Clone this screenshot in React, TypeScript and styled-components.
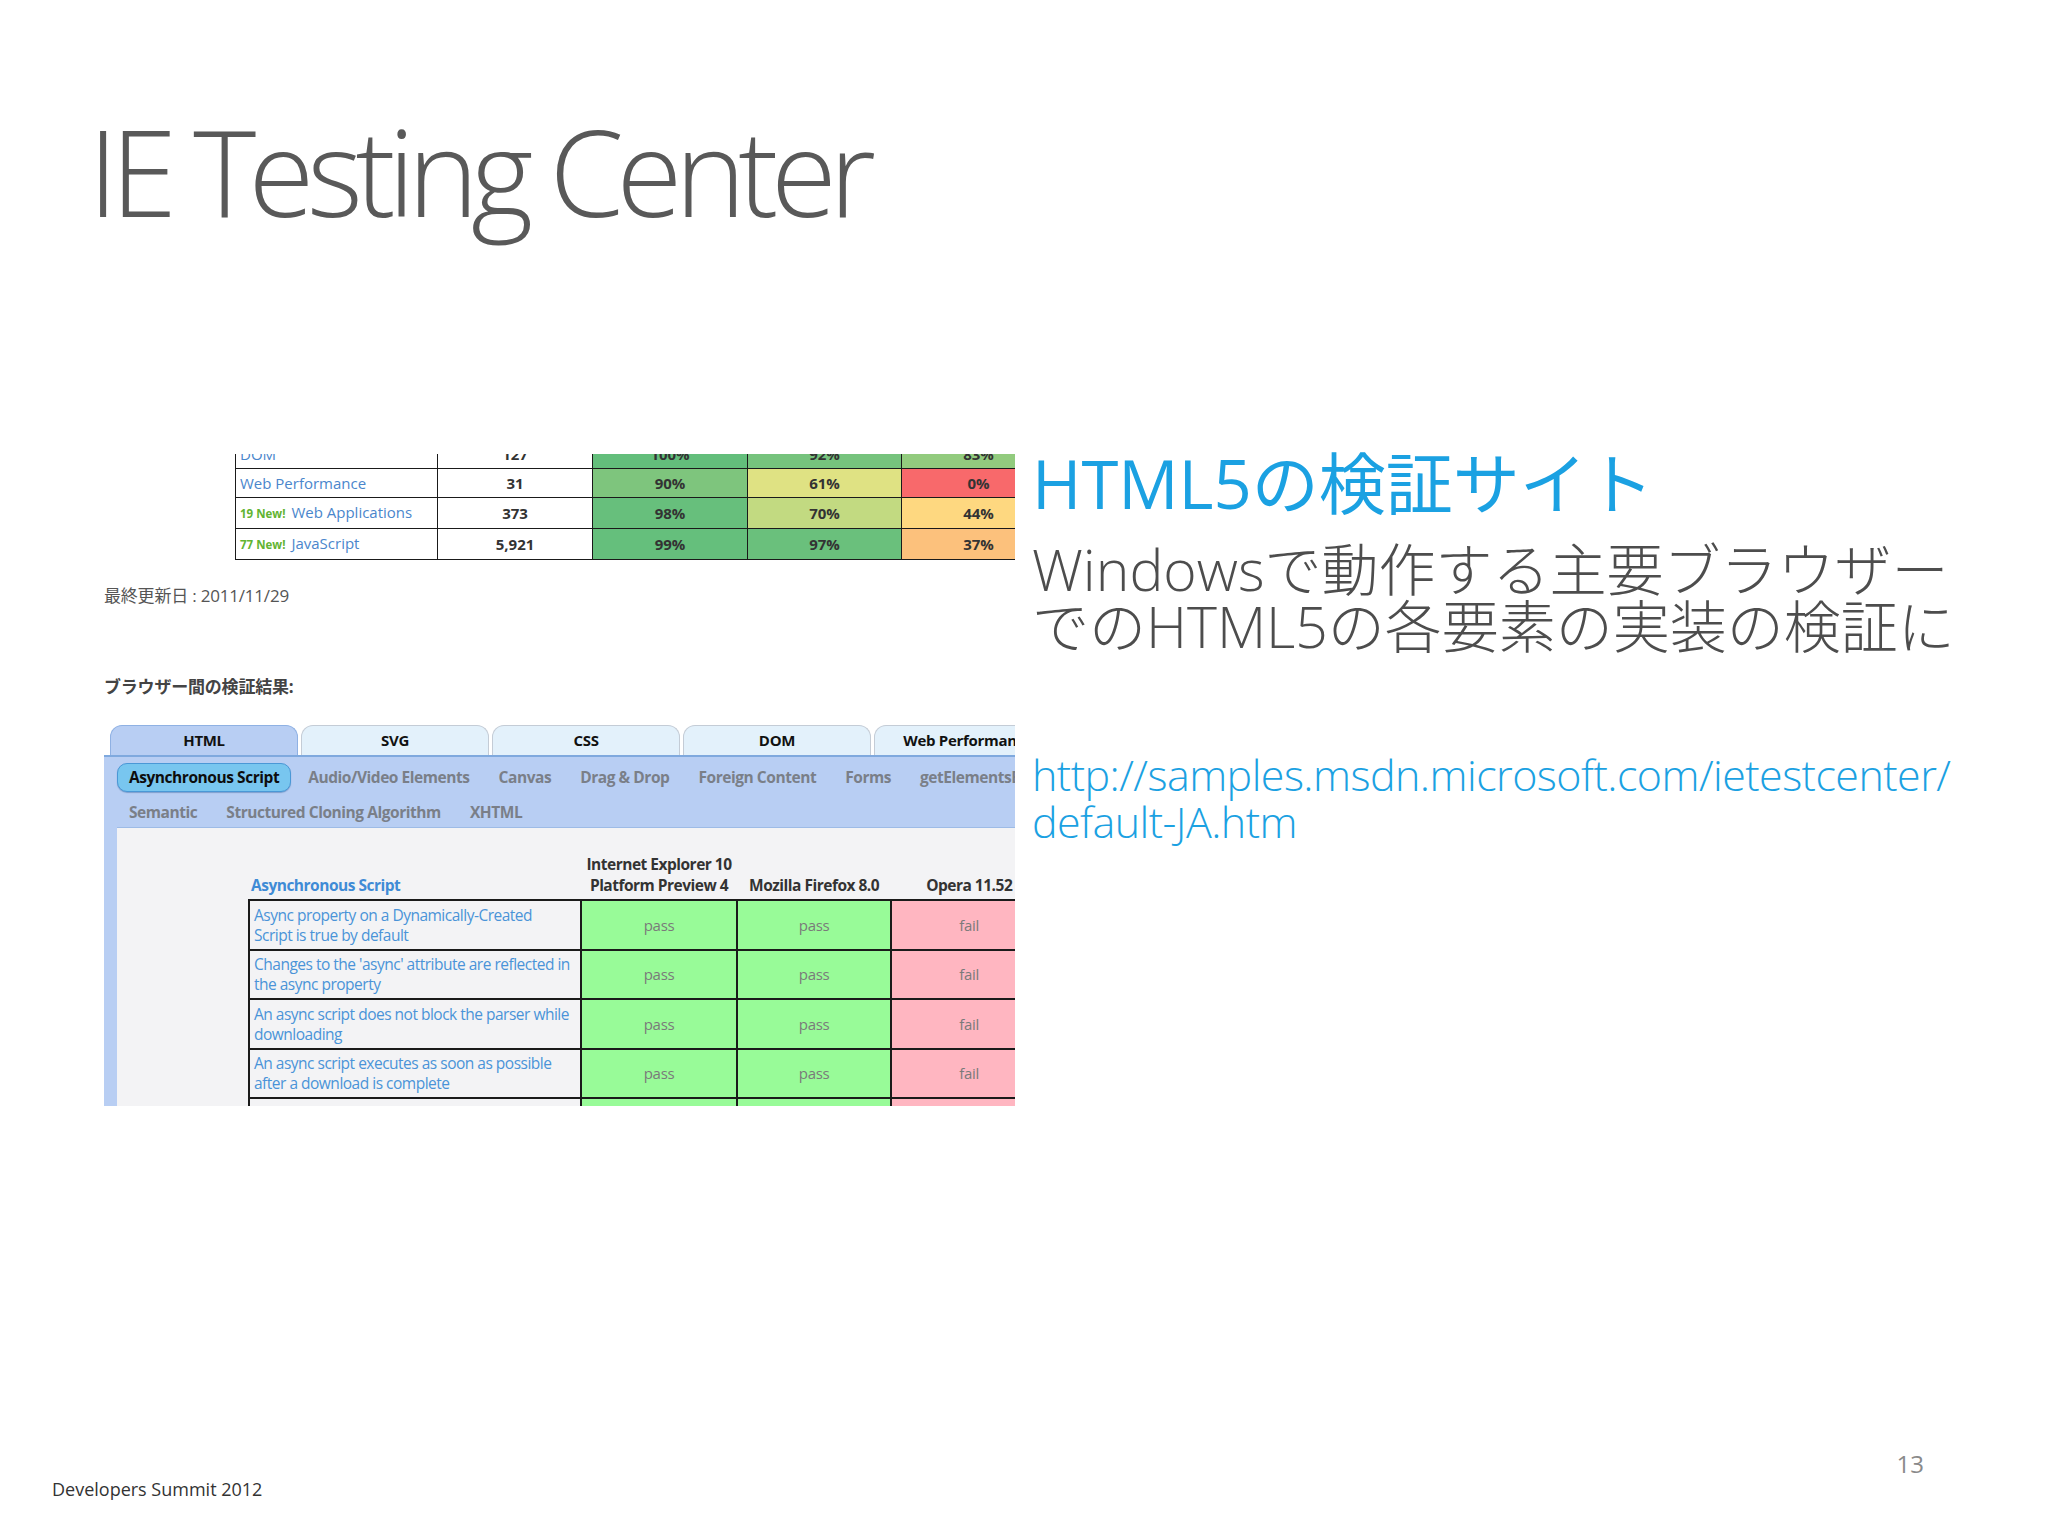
import React from "react";
import styled, { createGlobalStyle } from "styled-components";

const Global = createGlobalStyle`
  html, body { margin: 0; padding: 0; background: #ffffff; }
  body { font-family: "Open Sans", "Noto Sans CJK JP", sans-serif; }
`;

const Slide = styled.div`
  width: 2048px;
  height: 1536px;
  box-sizing: border-box;
  display: flex;
  flex-direction: column;
  background: #ffffff;
  overflow: hidden;
`;

const Title = styled.h1`
  margin: 89px 0 0 88px;
  font-family: "Open Sans", sans-serif;
  font-weight: 300;
  font-size: 120px;
  line-height: 163px;
  letter-spacing: -7.5px;
  color: #595959;
`;

const Main = styled.div`
  display: flex;
  gap: 17px;
  margin: 202px 0 0 104px;
  flex: 1;
`;

const Shot = styled.div`
  width: 911px;
  height: 652px;
  overflow: hidden;
  flex: none;
  background: #ffffff;
  font-family: "Open Sans", "Noto Sans CJK JP", sans-serif;
  display: flex;
  flex-direction: column;
`;

const TopWrap = styled.div`
  height: 106px;
  overflow: hidden;
  margin-left: 131px;
  flex: none;
`;

const ScoreTable = styled.table`
  border-collapse: collapse;
  margin-top: -15px;
  table-layout: fixed;
  width: 820px;
  td {
    border: 1.5px solid #1a1a1a;
    height: 28px;
    padding: 0;
    font-size: 15px;
    line-height: 28px;
  }
`;

const NameCell = styled.td`
  padding-left: 4px !important;
  color: #4a86cc;
  white-space: nowrap;
  overflow: hidden;
`;

const NewTag = styled.span`
  color: #62b431;
  font-weight: 700;
  font-size: 11.5px;
  margin-right: 6px;
`;

const CountCell = styled.td`
  text-align: center;
  font-weight: 700;
  color: #333;
`;

const PctCell = styled.td<{ $bg: string }>`
  text-align: center;
  font-weight: 700;
  color: #333;
  background: ${(p) => p.$bg};
`;

const Updated = styled.div`
  margin-top: 25px;
  font-size: 17px;
  line-height: 22px;
  color: #555;
  letter-spacing: -0.2px;
`;

const SectionLabel = styled.div`
  margin-top: 69px;
  font-size: 17px;
  line-height: 22px;
  font-weight: 700;
  color: #444;
  letter-spacing: -0.2px;
`;

const TabBar = styled.div`
  margin-top: 27px;
  display: flex;
  gap: 3px;
  padding-left: 6px;
  height: 30px;
  flex: none;
`;

const Tab = styled.div<{ $active?: boolean }>`
  width: 188px;
  flex: none;
  box-sizing: border-box;
  border-radius: 12px 12px 0 0;
  border: 1.5px solid ${(p) => (p.$active ? "#8fb1e3" : "#c4ccd6")};
  border-bottom: none;
  background: ${(p) => (p.$active ? "#b8cef3" : "#e3f1fb")};
  text-align: center;
  font-weight: 700;
  font-size: 15px;
  line-height: 28px;
  color: #111;
  white-space: nowrap;
  overflow: hidden;
  letter-spacing: -0.3px;
`;

const Panel = styled.div`
  background: #b8cef3;
  border-top: 2px solid #7fa9de;
  display: flex;
  flex-direction: column;
  flex: 1;
  padding-left: 13px;
`;

const SubRow = styled.div<{ $h: number }>`
  display: flex;
  align-items: center;
  gap: 5px;
  height: ${(p) => p.$h}px;
  white-space: nowrap;
`;

const SubTab = styled.div<{ $active?: boolean }>`
  padding: 0 11px;
  height: 29px;
  line-height: 27px;
  box-sizing: border-box;
  border-radius: 10px;
  font-weight: 700;
  font-size: 15.5px;
  letter-spacing: -0.45px;
  color: ${(p) => (p.$active ? "#0d0d0d" : "#7a7f88")};
  background: ${(p) => (p.$active ? "#78c6ef" : "transparent")};
  border: 1.5px solid ${(p) => (p.$active ? "#4a98d6" : "transparent")};
  box-shadow: ${(p) => (p.$active ? "0 1px 1px rgba(40,90,150,0.4)" : "none")};
`;

const Content = styled.div`
  flex: 1;
  background: #f3f3f5;
  border-top: 1.5px solid #9dbbe6;
  padding: 0 0 0 131px;
  overflow: hidden;
`;

const ResultTable = styled.table`
  border-collapse: collapse;
  table-layout: fixed;
  width: 800px;
  margin-top: 26px;
`;

const HeadCell = styled.th<{ $left?: boolean }>`
  vertical-align: bottom;
  text-align: ${(p) => (p.$left ? "left" : "center")};
  font-size: 15.5px;
  line-height: 21px;
  font-weight: 700;
  color: ${(p) => (p.$left ? "#3f8bd6" : "#333")};
  padding: 0 0 3px ${(p) => (p.$left ? "2px" : "0")};
  letter-spacing: -0.5px;
  white-space: nowrap;
`;

const TestCell = styled.td`
  border: 2px solid #1a1a1a;
  height: 47.5px;
  padding: 0 4px;
  font-size: 15.5px;
  line-height: 20px;
  color: #4a93d8;
  letter-spacing: -0.5px;
  vertical-align: middle;
`;

const ResCell = styled.td<{ $pass: boolean }>`
  border: 2px solid #1a1a1a;
  text-align: center;
  font-size: 15px;
  color: #7a7a7a;
  letter-spacing: -0.3px;
  background: ${(p) => (p.$pass ? "#98fb98" : "#ffb6c1")};
`;

const Side = styled.div`
  display: flex;
  flex-direction: column;
`;

const Heading = styled.div`
  font-family: "Open Sans", "Noto Sans CJK JP", sans-serif;
  font-weight: 400;
  font-size: 67px;
  line-height: 74px;
  color: #1ba1e2;
  margin-top: -8px;
`;

const Body = styled.div`
  font-family: "Open Sans", "Noto Sans CJK JP", sans-serif;
  font-weight: 300;
  font-size: 57px;
  line-height: 57px;
  color: #4d4d4d;
  margin-top: 21px;
  white-space: nowrap;
`;

const Url = styled.div`
  font-family: "Open Sans", sans-serif;
  font-weight: 300;
  font-size: 43px;
  line-height: 47px;
  color: #1ba1e2;
  margin-top: 96px;
  letter-spacing: -0.55px;
  white-space: nowrap;
`;

const Footer = styled.div`
  display: flex;
  justify-content: space-between;
  align-items: flex-end;
  padding: 0 124px 35px 52px;
`;

const FootText = styled.div`
  font-size: 18px;
  line-height: 24px;
  color: #333;
`;

const PageNo = styled.div`
  font-size: 24px;
  line-height: 32px;
  color: #8a8a8a;
  margin-bottom: 21px;
`;

const scoreRows = [
  { name: "DOM", tag: "", count: "127", p: [["100%", "#63be7b"], ["92%", "#76c37d"], ["83%", "#92cb7e"]] },
  { name: "Web Performance", tag: "", count: "31", p: [["90%", "#7ec57d"], ["61%", "#dfe283"], ["0%", "#f8696b"]] },
  { name: "Web Applications", tag: "19 New!", count: "373", p: [["98%", "#67bf7c"], ["70%", "#c2da81"], ["44%", "#fed880"]] },
  { name: "JavaScript", tag: "77 New!", count: "5,921", p: [["99%", "#65bf7c"], ["97%", "#6ac07c"], ["37%", "#fcc17c"]] },
];

const tests: string[][] = [
  ["Async property on a Dynamically-Created", "Script is true by default"],
  ["Changes to the 'async' attribute are reflected in", "the async property"],
  ["An async script does not block the parser while", "downloading"],
  ["An async script executes as soon as possible", "after a download is complete"],
  [],
];

export default function App() {
  return (
    <>
      <Global />
      <Slide>
        <Title>IE Testing Center</Title>
        <Main>
          <Shot>
            <TopWrap>
              <ScoreTable>
                <colgroup>
                  <col style={{ width: 202 }} />
                  <col style={{ width: 155 }} />
                  <col style={{ width: 155 }} />
                  <col style={{ width: 154 }} />
                  <col style={{ width: 154 }} />
                </colgroup>
                <tbody>
                  {scoreRows.map((r) => (
                    <tr key={r.name}>
                      <NameCell>
                        {r.tag && <NewTag>{r.tag}</NewTag>}
                        {r.name}
                      </NameCell>
                      <CountCell>{r.count}</CountCell>
                      {r.p.map(([v, c], i) => (
                        <PctCell key={i} $bg={c}>
                          {v}
                        </PctCell>
                      ))}
                    </tr>
                  ))}
                </tbody>
              </ScoreTable>
            </TopWrap>
            <Updated>最終更新日 : 2011/11/29</Updated>
            <SectionLabel>ブラウザー間の検証結果:</SectionLabel>
            <TabBar>
              <Tab $active>HTML</Tab>
              <Tab>SVG</Tab>
              <Tab>CSS</Tab>
              <Tab>DOM</Tab>
              <Tab>Web Performance</Tab>
            </TabBar>
            <Panel>
              <SubRow $h={40}>
                <SubTab $active>Asynchronous Script</SubTab>
                <SubTab>Audio/Video Elements</SubTab>
                <SubTab>Canvas</SubTab>
                <SubTab>Drag &amp; Drop</SubTab>
                <SubTab>Foreign Content</SubTab>
                <SubTab>Forms</SubTab>
                <SubTab>getElementsByClassName</SubTab>
              </SubRow>
              <SubRow $h={30}>
                <SubTab>Semantic</SubTab>
                <SubTab>Structured Cloning Algorithm</SubTab>
                <SubTab>XHTML</SubTab>
              </SubRow>
              <Content>
                <ResultTable>
                  <colgroup>
                    <col style={{ width: 331 }} />
                    <col style={{ width: 155 }} />
                    <col style={{ width: 154 }} />
                    <col style={{ width: 155 }} />
                  </colgroup>
                  <thead>
                    <tr>
                      <HeadCell $left>Asynchronous Script</HeadCell>
                      <HeadCell>
                        Internet Explorer 10
                        <br />
                        Platform Preview 4
                      </HeadCell>
                      <HeadCell>Mozilla Firefox 8.0</HeadCell>
                      <HeadCell>Opera 11.52</HeadCell>
                    </tr>
                  </thead>
                  <tbody>
                    {tests.map((lines, i) => (
                      <tr key={i}>
                        <TestCell>
                          {lines.map((l, j) => (
                            <React.Fragment key={j}>
                              {j > 0 && <br />}
                              {l}
                            </React.Fragment>
                          ))}
                        </TestCell>
                        <ResCell $pass>pass</ResCell>
                        <ResCell $pass>pass</ResCell>
                        <ResCell $pass={false}>fail</ResCell>
                      </tr>
                    ))}
                  </tbody>
                </ResultTable>
              </Content>
            </Panel>
          </Shot>
          <Side>
            <Heading>HTML5の検証サイト</Heading>
            <Body>
              Windowsで動作する主要ブラウザー
              <br />
              でのHTML5の各要素の実装の検証に
            </Body>
            <Url>
              http://samples.msdn.microsoft.com/ietestcenter/
              <br />
              default-JA.htm
            </Url>
          </Side>
        </Main>
        <Footer>
          <FootText>Developers Summit 2012</FootText>
          <PageNo>13</PageNo>
        </Footer>
      </Slide>
    </>
  );
}
